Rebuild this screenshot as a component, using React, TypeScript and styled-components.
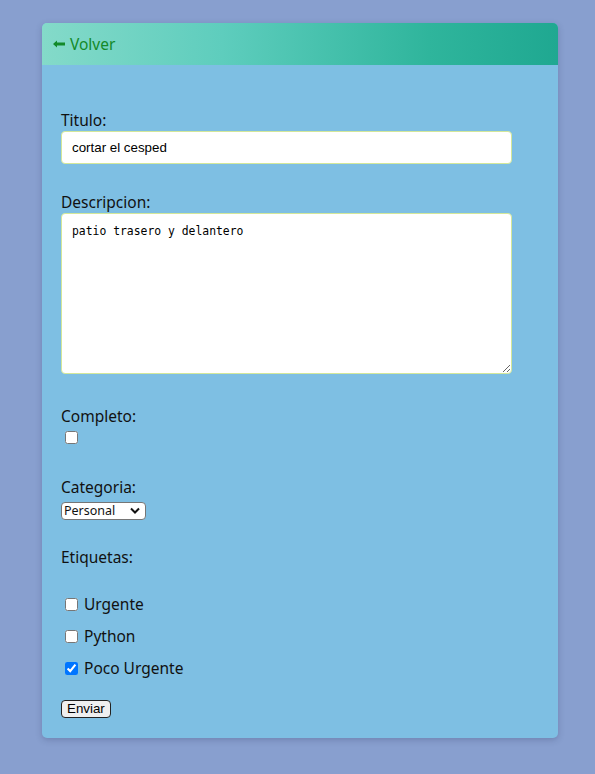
import React, { useState } from 'react';
import styled, { createGlobalStyle } from 'styled-components';

const GlobalStyle = createGlobalStyle`
  html, body {
    margin: 0;
    padding: 0;
    background: #889fcf;
  }
  body {
    min-height: 774px;
    font-family: "Noto Sans", "Open Sans", sans-serif;
  }
`;

const Card = styled.div`
  width: 516px;
  margin: 23px 0 0 42px;
  background: #7ebfe3;
  border-radius: 5px;
  overflow: hidden;
  box-shadow: 0 2px 6px rgba(40, 50, 90, 0.25);
`;

const Header = styled.div`
  height: 42px;
  display: flex;
  align-items: center;
  padding-left: 11px;
  background: linear-gradient(90deg, #84dac9 0%, #5ecdbd 35%, #2fb59c 75%, #1fa891 100%);
`;

const BackLink = styled.a`
  display: flex;
  align-items: center;
  gap: 5px;
  color: #138a2a;
  font-size: 15.5px;
  text-decoration: none;
  cursor: pointer;
`;

const Form = styled.form`
  padding: 44px 19px 20px;
`;

const Label = styled.label`
  display: block;
  font-size: 15.5px;
  line-height: 22px;
  color: #111;
`;

const Field = styled.div<{ gap?: number }>`
  margin-bottom: ${p => p.gap ?? 27}px;
`;

const TextInput = styled.input`
  display: block;
  box-sizing: border-box;
  width: 451px;
  height: 33px;
  padding: 0 10px;
  border: 1px solid #d3e79a;
  border-radius: 4px;
  background: #fff;
  font-family: "Liberation Sans", Arial, sans-serif;
  font-size: 13.33px;
  color: #000;
  outline: none;
`;

const TextArea = styled.textarea`
  display: block;
  box-sizing: border-box;
  width: 451px;
  height: 161px;
  padding: 9px 10px;
  border: 1px solid #d3e79a;
  border-radius: 4px;
  background: #fff;
  font-family: "DejaVu Sans Mono", monospace;
  font-size: 11.4px;
  line-height: 16px;
  color: #000;
  outline: none;
`;

const Check = styled.input.attrs({ type: 'checkbox' })`
  width: 13px;
  height: 13px;
  margin: 3px 3px 3px 4px;
`;

const SelectWrap = styled.div`
  position: relative;
  display: inline-block;
  margin-top: 3px;
`;

const Select = styled.select`
  display: block;
  appearance: none;
  box-sizing: border-box;
  height: 18px;
  width: 85px;
  padding: 0 0 0 2px;
  font-family: "Noto Sans", sans-serif;
  font-size: 12.5px;
  line-height: 16px;
  color: #111;
  background: #fff;
  border: 1px solid #767676;
  border-radius: 4px;
`;

const Chevron = styled.svg`
  position: absolute;
  right: 6px;
  top: 5px;
  pointer-events: none;
`;

const TagList = styled.div`
  display: flex;
  flex-direction: column;
  gap: 10px;
  margin-top: 25px;
  margin-bottom: 17px;
`;

const TagRow = styled.label`
  display: flex;
  align-items: center;
  gap: 3px;
  font-size: 15.5px;
  line-height: 22px;
  color: #111;
`;

const Submit = styled.button`
  box-sizing: border-box;
  height: 18px;
  padding: 0 5px;
  font-family: "Liberation Sans", Arial, sans-serif;
  font-size: 13.33px;
  line-height: 14px;
  color: #000;
  background: #efefef;
  border: 1px solid #222;
  border-radius: 4px;
`;

const ArrowIcon = () => (
  <svg width="12" height="8" viewBox="0 0 12 8">
    <path d="M0 4 L4 0.5 L4 2.6 L12 2.6 L12 5.4 L4 5.4 L4 7.5 Z" fill="#138a2a" />
  </svg>
);

export default function App() {
  const [titulo, setTitulo] = useState('cortar el cesped');
  const [desc, setDesc] = useState('patio trasero y delantero');
  const [completo, setCompleto] = useState(false);
  const [cat, setCat] = useState('Personal');
  const [tags, setTags] = useState<Record<string, boolean>>({
    Urgente: false,
    Python: false,
    'Poco Urgente': true,
  });

  return (
    <>
      <GlobalStyle />
      <Card>
        <Header>
          <BackLink>
            <ArrowIcon />
            Volver
          </BackLink>
        </Header>
        <Form onSubmit={e => e.preventDefault()}>
          <Field>
            <Label>Titulo:</Label>
            <TextInput value={titulo} onChange={e => setTitulo(e.target.value)} />
          </Field>
          <Field gap={31}>
            <Label>Descripcion:</Label>
            <TextArea value={desc} onChange={e => setDesc(e.target.value)} />
          </Field>
          <Field gap={27}>
            <Label>Completo:</Label>
            <Check checked={completo} onChange={() => setCompleto(!completo)} />
          </Field>
          <Field gap={26}>
            <Label>Categoria:</Label>
            <SelectWrap>
              <Select value={cat} onChange={e => setCat(e.target.value)}>
                <option>Personal</option>
                <option>Trabajo</option>
              </Select>
              <Chevron width="10" height="7" viewBox="0 0 10 7">
                <path d="M1 1.5 L5 5.5 L9 1.5" fill="none" stroke="#111" strokeWidth="2" />
              </Chevron>
            </SelectWrap>
          </Field>
          <Label>Etiquetas:</Label>
          <TagList>
            {Object.keys(tags).map(t => (
              <TagRow key={t}>
                <Check checked={tags[t]} onChange={() => setTags({ ...tags, [t]: !tags[t] })} />
                {t}
              </TagRow>
            ))}
          </TagList>
          <Submit type="submit">Enviar</Submit>
        </Form>
      </Card>
    </>
  );
}
